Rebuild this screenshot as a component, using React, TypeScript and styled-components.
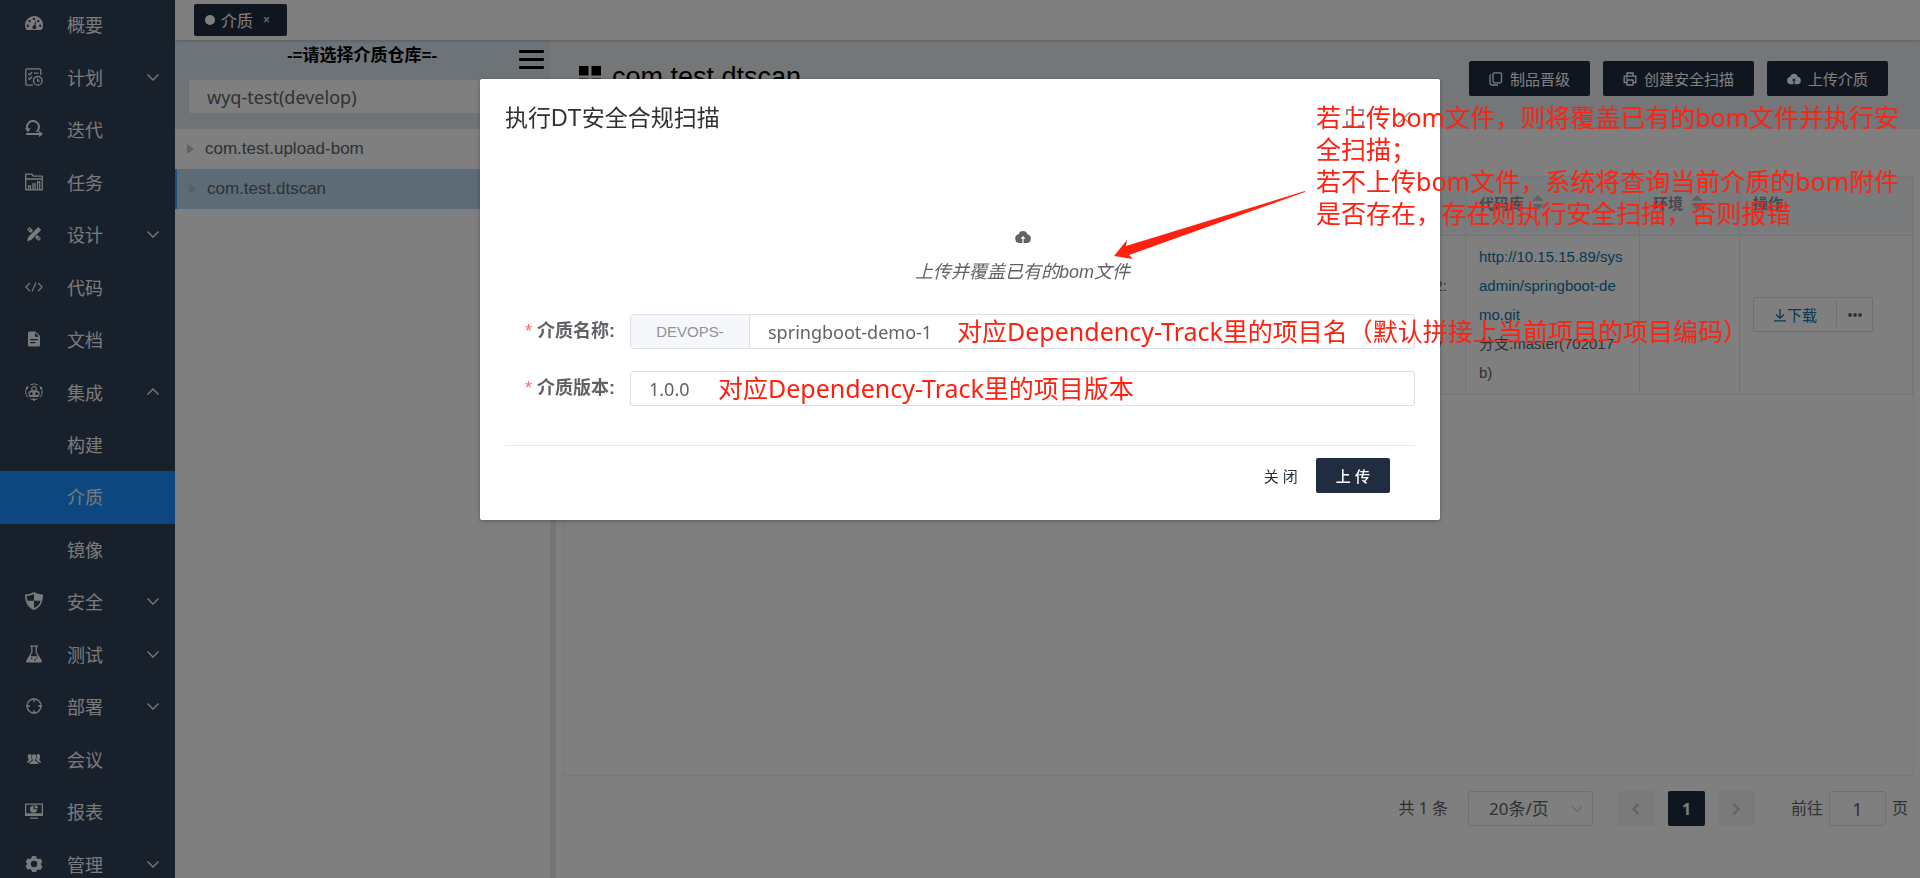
import React from "react";
import styled, { createGlobalStyle, css } from "styled-components";

const ui = `"Liberation Sans", "Noto Sans CJK SC", sans-serif`;
const humanist = `"Noto Sans", "Noto Sans CJK SC", sans-serif`;

const GlobalStyle = createGlobalStyle`
  *, *::before, *::after { box-sizing: border-box; }
  body { margin: 0; background: #fff; font-family: ${ui}; color: #606266; }
  button, input, select { font-family: inherit; margin: 0; }
  svg { display: block; flex: none; }
`;

/* ---------- icons ---------- */

type IconProps = { size?: number; children: React.ReactNode; line?: boolean; box?: number };
const Icon = ({ size = 18, box = 18, line, children }: IconProps) => (
  <svg
    width={size}
    height={size}
    viewBox={`0 0 ${box} ${box}`}
    fill={line ? "none" : "currentColor"}
    stroke={line ? "currentColor" : "none"}
    strokeWidth={1.3}
    fillRule="evenodd"
    aria-hidden="true"
  >
    {children}
  </svg>
);

const GaugeIcon = () => (
  <Icon>
    <path d="M9 1a9 9 0 0 0-9 9c0 1.700.4 3.200 1.200 4.600.2.300.5.400.8.400h14c.3 0 .6-.1.800-.4A9 9 0 0 0 9 1zM2.800 9.500a1.200 1.200 0 1 1 0 2.400 1.200 1.200 0 0 1 0-2.400zM4.600 4.900a1.200 1.200 0 1 1 0 2.400 1.200 1.200 0 0 1 0-2.400zM9 2.700a1.200 1.200 0 1 1 0 2.400 1.200 1.200 0 0 1 0-2.400zM13.400 4.900a1.200 1.200 0 1 1 0 2.400 1.200 1.200 0 0 1 0-2.400zM15.200 9.500a1.200 1.200 0 1 1 0 2.400 1.200 1.200 0 0 1 0-2.400zM10.500 6l.8.200-1 4.200a2 2 0 1 1-1.100-.2z" />
  </Icon>
);
const PlanIcon = () => (
  <Icon line>
    <path d="M8 17.200H2.200a1.400 1.400 0 0 1-1.400-1.400V2.200A1.400 1.400 0 0 1 2.200.8h12.200a1.400 1.400 0 0 1 1.400 1.400V7M3.300 5.500l1.400 1.300L7.200 4M9 5.200h4.500M3.300 10l1.400 1.300 2.500-2.800" />
    <circle cx="12.800" cy="12.800" r="4.300" />
    <path d="M12.700 10.600v2.500h2" />
  </Icon>
);
const SprintIcon = () => (
  <Icon line>
    <path strokeWidth="2" d="M3.500 11A6 6 0 1 1 11.500 11.800M1 14h15" />
    <path fill="currentColor" stroke="none" d="M0 8.300h5.500l-2.500 4zM14 10.800l4 3.200-4 3z" />
  </Icon>
);
const TaskIcon = () => (
  <Icon line>
    <path d="M.7 16.800V1.200h6.200l1.200 2h9.200v13.600zM.7 6h16.600M3.500 16.500v-3.700h2v3.700M8 16.500v-5.700h2v5.700M12.500 16.500V9h2.200v7.500" />
  </Icon>
);
const DesignIcon = () => (
  <Icon>
    <path d="M13.200 1.900 16.200 4.900 6.200 15l-4.200 1.300 1.200-4.300z" />
    <path d="M4.500 2 2 4.500l3.600 3.600 2.500-2.500zm0 1.600.8.800-.8.800-.9-.8zM12.400 9.900l-2.500 2.500 3.600 3.600 2.500-2.500zm1.200 2.700.9.800-1 .9-.8-.8z" />
  </Icon>
);
const CodeIcon = () => (
  <Icon line>
    <path strokeWidth="1.100" d="M4.800 5 .9 9l3.900 4M13.200 5l3.900 4-3.900 4M11 4.500l-4 9" />
  </Icon>
);
const DocIcon = () => (
  <Icon>
    <path d="M4.500 1.500h6l4.500 4.500v9a1.500 1.500 0 0 1-1.500 1.500h-9A1.500 1.500 0 0 1 3 15V3a1.500 1.500 0 0 1 1.500-1.500zM10 2.700v4h4zM5.200 9v1.300h7.600V9zm0 3v1.300h5.300V12z" />
  </Icon>
);
const IntegrateIcon = () => (
  <Icon line>
    <path strokeWidth="1" d="M3 14.500A7.700 7.700 0 0 1 3.400 3M5.500 1.800a7.700 7.700 0 0 1 7.500.2M14.800 3.400a7.700 7.700 0 0 1 .2 11M12.500 15.800a7 7 0 0 1-7 0" />
    <circle strokeWidth="1.200" cx="9" cy="5.800" r="2.300" />
    <circle strokeWidth="1.200" cx="6.200" cy="10.600" r="2.300" />
    <circle strokeWidth="1.200" cx="11.800" cy="10.600" r="2.300" />
    <path strokeWidth="1.200" d="M9 8v5M4.500 13.300h9M6.500 8 5 9.500M11.500 8 13 9.500" />
    <circle fill="currentColor" stroke="none" cx="9" cy="16.500" r="1.300" />
    <circle fill="currentColor" stroke="none" cx="2" cy="5" r="1.200" />
    <circle fill="currentColor" stroke="none" cx="16" cy="5" r="1.200" />
  </Icon>
);
const ShieldIcon = () => (
  <Icon>
    <path d="M9 0c2.500 1.600 5.500 2.400 9 2.500 0 7.500-2.500 13-9 15.500C2.500 15.500 0 10 0 2.500 3.500 2.400 6.500 1.600 9 0zm0 2C7 3 4.500 3.700 1.700 3.900c.1 1.700.4 3.400.8 4.800H9zm0 6.700v7.400c3.600-1.500 5.700-4 6.600-7.400z" />
  </Icon>
);
const FlaskIcon = () => (
  <Icon>
    <path d="M5 .5h8v1.300h-1.200v5.400l5 8.600c.5.900 0 1.700-1 1.700H2.200c-1 0-1.500-.8-1-1.700l5-8.600V1.800H5zm2.500 1.300v5.800L5.300 11.300h7.400l-2.200-3.700V1.800zM6 12.800v1.400h1.400v-1.400zm3.400 1.200v1.500h1.500V14zm2.100-1.700v1.100h1.200v-1.100z" />
  </Icon>
);
const TargetIcon = () => (
  <Icon line>
    <circle cx="9" cy="9" r="7" />
    <path d="M9 1v4M9 13v4M1 9h4M13 9h4" />
  </Icon>
);
const PeopleIcon = () => (
  <Icon>
    <path d="M4.700 4a2.200 2.400 0 0 1 1.900 1.200C6 6.500 6.300 8.500 7 9.600c-.2 1.300-2 1.700-2.600 2.900H1.800c0-2 2-1.700 2-2.800C2.300 8 2.300 4 4.700 4zM13.300 4a2.200 2.400 0 0 0-1.900 1.200c.6 1.300.3 3.300-.4 4.400.2 1.300 2 1.700 2.600 2.900h2.600c0-2-2-1.700-2-2.800C15.700 8 15.700 4 13.300 4z" />
    <path d="M9 4.300c2.900 0 2.600 4 1.100 5.700 0 1.700 3.300 1.500 3.300 4H4.600c0-2.500 3.300-2.300 3.300-4C6.400 8.300 6.100 4.300 9 4.300z" />
  </Icon>
);
const ReportIcon = () => (
  <Icon>
    <path d="M0 1.500h18V14H0zm1.300 1.300v8.400h15.400V2.800zM5 15.500h8v1.300H5z" />
    <path d="M8.600 3.600v3.600h3.600a3.600 3.600 0 1 1-3.600-3.600zM9.800 3a3.500 3.500 0 0 1 3.200 3.200H9.800z" />
  </Icon>
);
const GearIcon = () => (
  <Icon>
    <path d="M7 1h4l.7 2.300 1.500.8 2.300-.5 2 3.400-1.600 1.800v.9l1.600 1.800-2 3.400-2.300-.5-1.500.9L11 17H7l-.7-2.200-1.500-.9-2.300.5-2-3.400 1.600-1.800v-.9L.5 7l2-3.400 2.300.5 1.500-.8zm2 4.800a3.200 3.200 0 1 0 0 6.400 3.200 3.200 0 0 0 0-6.400z" />
  </Icon>
);
const Chevron = ({ up, size = 14 }: { up?: boolean; size?: number }) => (
  <Icon line size={size} box={14}>
    <path d={up ? "M1.500 9.500 7 4l5.500 5.500" : "M1.500 4.500 7 10l5.500-5.500"} />
  </Icon>
);
const CloudIcon = ({ size = 16 }: { size?: number }) => (
  <Icon size={size} box={16}>
    <path d="M8 2a4.500 4.500 0 0 1 4.300 3.300A4.400 4.400 0 0 1 11.700 14H8.600V9.800h1.900L8 7 5.500 9.800h1.900V14H4.300a4.400 4.400 0 0 1-.6-8.700A4.500 4.500 0 0 1 8 2z" />
  </Icon>
);
const CopyIcon = () => (
  <Icon line size={14} box={14}>
    <path d="M5.500.8h5.500a1.500 1.500 0 0 1 1.500 1.500v7a1.500 1.500 0 0 1-1.500 1.500H5.500A1.500 1.500 0 0 1 4 9.300v-7A1.500 1.500 0 0 1 5.500.8zM2 2.500A1.500 1.500 0 0 0 1 4v7.300A1.800 1.800 0 0 0 2.800 13h6" />
  </Icon>
);
const PrinterIcon = () => (
  <Icon line size={14} box={14}>
    <path d="M4 4V1h6v3M4 10.500H1.200V4.200h11.600v6.300H10M4 8h6v5H4zM3 6h1.500" />
  </Icon>
);
const DownloadIcon = () => (
  <Icon line size={14} box={14}>
    <path d="M7 1v9M3 6.500 7 10.300l4-3.800M1 12.800h12" />
  </Icon>
);
const GridIcon = () => (
  <Icon size={22} box={22}>
    <path d="M0 0h9.500v9.500H0zM12.500 0H22v9.500h-9.500zM0 12.500h9.500V22H0zM12.500 12.500H22V22h-9.500z" />
  </Icon>
);

/* ---------- sidebar ---------- */

const Shell = styled.div`
  display: flex;
  height: 100vh;
  overflow: hidden;
`;
const Sidebar = styled.nav`
  flex: 0 0 175px;
  display: flex;
  flex-direction: column;
  height: calc(100% + 14px);
  margin-top: -1px;
  background: #304156;
`;
const MenuLink = styled.a<{ $active?: boolean }>`
  flex: 1 0 0;
  min-height: 48px;
  display: grid;
  grid-template-columns: 18px 1fr 14px;
  column-gap: 24px;
  align-items: center;
  padding: 0 15px 2px 25px;
  font-size: 18px;
  color: #f4f4f5;
  text-decoration: none;
  background: ${(p) => (p.$active ? "#1890ff" : "transparent")};
`;

type MenuEntry = { label: string; icon?: React.ReactNode; fold?: "down" | "up"; active?: boolean };
const menu: MenuEntry[] = [
  { label: "概要", icon: <GaugeIcon /> },
  { label: "计划", icon: <PlanIcon />, fold: "down" },
  { label: "迭代", icon: <SprintIcon /> },
  { label: "任务", icon: <TaskIcon /> },
  { label: "设计", icon: <DesignIcon />, fold: "down" },
  { label: "代码", icon: <CodeIcon /> },
  { label: "文档", icon: <DocIcon /> },
  { label: "集成", icon: <IntegrateIcon />, fold: "up" },
  { label: "构建" },
  { label: "介质", active: true },
  { label: "镜像" },
  { label: "安全", icon: <ShieldIcon />, fold: "down" },
  { label: "测试", icon: <FlaskIcon />, fold: "down" },
  { label: "部署", icon: <TargetIcon />, fold: "down" },
  { label: "会议", icon: <PeopleIcon /> },
  { label: "报表", icon: <ReportIcon /> },
  { label: "管理", icon: <GearIcon />, fold: "down" },
];

/* ---------- workspace ---------- */

const Workspace = styled.div`
  flex: 1;
  min-width: 0;
  display: flex;
  flex-direction: column;
`;
const TabBar = styled.header`
  flex: 0 0 40px;
  display: flex;
  align-items: center;
  padding-left: 19px;
  position: relative;
  background: #fff;
  box-shadow: 0 1px 3px rgba(0, 0, 0, 0.2);
`;
const PageTab = styled.button`
  display: flex;
  align-items: center;
  height: 32px;
  padding: 0 17px 0 11px;
  gap: 6px;
  border: 0;
  border-radius: 2px;
  background: #202d40;
  color: #fff;
  font-size: 16px;
`;
const TabDot = styled.span`
  width: 10px;
  height: 10px;
  border-radius: 50%;
  background: #fff;
`;
const TabClose = styled.span`
  margin-left: 4px;
  font-size: 12px;
`;
const Columns = styled.div`
  flex: 1;
  min-height: 0;
  display: flex;
`;
const TreePanel = styled.aside`
  flex: 0 0 375px;
`;
const TreeHeader = styled.div`
  height: 89px;
  padding: 0 14px;
  background: #dce7ee;
`;
const TreeTitleRow = styled.div`
  display: grid;
  grid-template-columns: 1fr 25px;
  align-items: center;
  height: 40px;
  padding-bottom: 8px;
  margin-right: -8px;
`;
const TreeTitle = styled.h2`
  margin: 0;
  padding-left: 16px;
  text-align: center;
  font-size: 17px;
  line-height: 32px;
  font-weight: 700;
  color: #000;
`;
const MenuToggle = styled.button`
  display: flex;
  flex-direction: column;
  gap: 5px;
  width: 25px;
  margin-top: 6px;
  padding: 0;
  border: 0;
  background: none;
`;
const Bar = styled.span`
  height: 3px;
  border-radius: 1px;
  background: #000;
`;
const RepoSelect = styled.select`
  display: block;
  width: 100%;
  height: 33px;
  padding: 0 18px;
  border: 0;
  border-radius: 2px;
  appearance: none;
  background: #fff;
  color: #606266;
  font-family: ${humanist};
  font-size: 18px;
`;
const TreeList = styled.ul`
  margin: 0;
  padding: 0;
  list-style: none;
`;
const TreeNode = styled.li<{ $active?: boolean }>`
  display: flex;
  align-items: center;
  gap: 10px;
  height: 40px;
  padding-left: 12px;
  font-size: 17px;
  ${(p) =>
    p.$active &&
    css`
      border-left: 2px solid #409eff;
      background: #bbd6ee;
    `}
`;
const Caret = styled.span<{ $faint?: boolean }>`
  border: 5px solid transparent;
  border-left: 7px solid ${(p) => (p.$faint ? "#aebfd0" : "#c0c4cc")};
  border-right: 0;
  margin-right: 1px;
`;
const Splitter = styled.div`
  flex: 0 0 6px;
  margin-top: 88px;
  background: #e6ebf1;
`;
const Main = styled.main`
  flex: 1;
  min-width: 0;
  display: flex;
  flex-direction: column;
  margin-left: -6px;
`;
const TitleBar = styled.div`
  flex: 0 0 89px;
  display: flex;
  align-items: flex-start;
  padding: 21px 32px 0 29px;
  background: #e8ecf0;
`;
const PageTitle = styled.h1`
  flex: 1;
  display: flex;
  align-items: center;
  gap: 11px;
  margin: 0;
  font-size: 27px;
  line-height: 32px;
  font-weight: 400;
  color: #000;
`;
const Actions = styled.div`
  display: flex;
  gap: 13px;
`;
const DarkButton = styled.button<{ $bold?: boolean }>`
  display: flex;
  align-items: center;
  justify-content: center;
  gap: 7px;
  height: 35px;
  padding: 0 20px;
  border: 0;
  border-radius: 2px;
  background: #202d40;
  color: #fff;
  font-size: 15px;
  font-weight: ${(p) => (p.$bold ? 500 : 400)};
`;
const Card = styled.section`
  flex: 1;
  min-height: 0;
  margin: 47px 6px 0 13px;
  border: 1px solid #ebeef5;
`;
const Table = styled.table`
  width: 100%;
  table-layout: fixed;
  border-collapse: collapse;
  font-size: 15px;
`;
const Th = styled.th<{ $w?: number }>`
  width: ${(p) => (p.$w ? `${p.$w}px` : "auto")};
  height: 58px;
  padding: 0 13px 6px;
  border-right: 1px solid #e4e8f0;
  border-bottom: 1px solid #e4e8f0;
  background: #f5f7fa;
  color: #909399;
  text-align: left;
`;
const HeadLabel = styled.span`
  display: flex;
  align-items: center;
  gap: 8px;
`;
const Sorter = styled.span`
  display: grid;
  gap: 3px;
  &::before,
  &::after {
    content: "";
    border: 6px solid transparent;
  }
  &::before {
    border-top: 0;
    border-bottom-color: #c0c4cc;
  }
  &::after {
    border-bottom: 0;
    border-top-color: #c0c4cc;
  }
`;
const Td = styled.td`
  height: 159px;
  padding: 6px 13px;
  border-right: 1px solid #e4e8f0;
  border-bottom: 1px solid #e4e8f0;
  line-height: 29px;
  word-break: break-all;
`;
const EdgeText = styled.div`
  display: grid;
  justify-content: end;
  row-gap: 29px;
  padding-right: 5px;
`;
const RepoLink = styled.a`
  display: block;
  color: #0e73a6;
  text-decoration: none;
`;
const SplitButton = styled.div`
  display: flex;
  align-items: center;
  width: 120px;
  height: 35px;
  border: 1px solid #dcdfe6;
  border-radius: 2px;
`;
const SplitPart = styled.button<{ $main?: boolean }>`
  flex: ${(p) => (p.$main ? "1" : "0 0 35px")};
  display: flex;
  align-items: center;
  justify-content: center;
  height: 25px;
  padding: 0;
  border: 0;
  border-right: ${(p) => (p.$main ? "1px solid #dcdfe6" : "0")};
  background: none;
  color: ${(p) => (p.$main ? "#0e73a6" : "#606266")};
  font-size: 15px;
`;
const Pager = styled.footer`
  flex: 0 0 102px;
  display: flex;
  align-items: flex-start;
  justify-content: flex-end;
  padding: 15px 12px 0 0;
  font-family: ${humanist};
  font-size: 16px;
  line-height: 35px;
`;
const SizeBox = styled.div`
  position: relative;
  margin: 0 25px 0 20px;
`;
const SizeSelect = styled.select`
  width: 125px;
  height: 35px;
  padding: 0 20px;
  border: 1px solid #dcdfe6;
  border-radius: 3px;
  appearance: none;
  background: #fff;
  color: #606266;
  font-size: 17px;
`;
const SelectArrow = styled.span`
  position: absolute;
  right: 10px;
  top: 12px;
  color: #c0c4cc;
`;
const PageButton = styled.button<{ $current?: boolean }>`
  display: grid;
  place-items: center;
  width: 37px;
  height: 35px;
  margin-right: 13px;
  padding: 0;
  border: 0;
  border-radius: 2px;
  font-size: 16px;
  font-weight: 700;
  background: ${(p) => (p.$current ? "#202d40" : "#f4f4f5")};
  color: ${(p) => (p.$current ? "#fff" : "#c0c4cc")};
`;
const Jump = styled.label`
  display: flex;
  gap: 6px;
  margin-left: 23px;
`;
const JumpInput = styled.input`
  width: 57px;
  height: 35px;
  border: 1px solid #dcdfe6;
  border-radius: 3px;
  text-align: center;
  color: #606266;
  font-family: ${humanist};
  font-size: 18px;
`;

/* ---------- dialog ---------- */

const Mask = styled.div`
  position: fixed;
  inset: 0;
  padding-top: 79px;
  background: rgba(0, 0, 0, 0.5);
`;
const Dialog = styled.section`
  position: relative;
  width: 50%;
  margin: 0 auto;
  padding: 25px 25px 27px;
  border-radius: 2px;
  background: #fff;
  box-shadow: 0 1px 4px rgba(0, 0, 0, 0.3);
`;
const DialogHeader = styled.header`
  display: flex;
  justify-content: space-between;
  height: 28px;
`;
const DialogTitle = styled.h2`
  margin: 0;
  font-size: 23px;
  line-height: 28px;
  font-weight: 400;
  color: #303133;
`;
const WindowControls = styled.div`
  display: flex;
  align-items: center;
  gap: 31px;
  padding-right: 2px;
  color: #909399;
`;
const IconButton = styled.button`
  padding: 0;
  border: 0;
  background: none;
  color: inherit;
`;
const UploadArea = styled.div`
  display: flex;
  flex-direction: column;
  align-items: center;
  gap: 15px;
  margin: 97px 0 30px 125px;
`;
const UploadHint = styled.em`
  font-size: 18px;
  line-height: 24px;
`;
const Field = styled.div`
  display: flex;
  margin-bottom: 22px;
`;
const FieldLabel = styled.label`
  flex: 0 0 125px;
  padding-right: 15px;
  text-align: right;
  font-size: 18px;
  line-height: 35px;
  font-weight: 700;
`;
const Required = styled.span`
  margin-right: 5px;
  font-weight: 400;
  color: #f56c6c;
`;
const FieldBox = styled.div`
  position: relative;
  flex: 1;
  display: flex;
  height: 35px;
  border: 1px solid #dcdfe6;
  border-radius: 3px;
`;
const Prepend = styled.span`
  flex: 0 0 119px;
  border-right: 1px solid #dcdfe6;
  background: #f5f7fa;
  color: #909399;
  font-size: 15px;
  line-height: 33px;
  text-align: center;
`;
const TextInput = styled.input`
  flex: 1;
  min-width: 0;
  padding: 0 18px;
  border: 0;
  background: none;
  color: #606266;
  font-family: ${humanist};
  font-size: 18px;
`;
const DialogFooter = styled.footer`
  display: flex;
  justify-content: flex-end;
  gap: 18px;
  margin-top: 39px;
  padding: 12px 25px 0 0;
  border-top: 1px solid #e9eaec;
`;
const TextButton = styled.button`
  padding: 0;
  border: 0;
  background: none;
  color: #1f2d3d;
  font-size: 15px;
`;

const Note = styled.p<{ $left: number; $top: number; $wide?: boolean }>`
  position: absolute;
  left: ${(p) => p.$left}px;
  top: ${(p) => p.$top}px;
  width: ${(p) => (p.$wide ? "600px" : "max-content")};
  margin: 0;
  font-family: ${humanist};
  font-size: 25px;
  line-height: 32px;
  color: #ff2010;
  pointer-events: none;
`;
const ArrowMark = styled.svg`
  position: absolute;
  left: 634px;
  top: 112px;
`;

export default function App() {
  return (
    <>
      <GlobalStyle />
      <Shell>
        <Sidebar>
          {menu.map((m) => (
            <MenuLink key={m.label} href="#" $active={m.active}>
              <span>{m.icon}</span>
              <span>{m.label}</span>
              {m.fold && <Chevron up={m.fold === "up"} />}
            </MenuLink>
          ))}
        </Sidebar>
        <Workspace>
          <TabBar>
            <PageTab>
              <TabDot />
              介质
              <TabClose>×</TabClose>
            </PageTab>
          </TabBar>
          <Columns>
            <TreePanel>
              <TreeHeader>
                <TreeTitleRow>
                  <TreeTitle>-=请选择介质仓库=-</TreeTitle>
                  <MenuToggle aria-label="菜单">
                    <Bar />
                    <Bar />
                    <Bar />
                  </MenuToggle>
                </TreeTitleRow>
                <RepoSelect aria-label="介质仓库">
                  <option>wyq-test(develop)</option>
                </RepoSelect>
              </TreeHeader>
              <TreeList>
                <TreeNode>
                  <Caret />
                  com.test.upload-bom
                </TreeNode>
                <TreeNode $active>
                  <Caret $faint />
                  com.test.dtscan
                </TreeNode>
              </TreeList>
            </TreePanel>
            <Splitter />
            <Main>
              <TitleBar>
                <PageTitle>
                  <GridIcon />
                  com.test.dtscan
                </PageTitle>
                <Actions>
                  <DarkButton>
                    <CopyIcon />
                    制品晋级
                  </DarkButton>
                  <DarkButton>
                    <PrinterIcon />
                    创建安全扫描
                  </DarkButton>
                  <DarkButton>
                    <CloudIcon size={14} />
                    上传介质
                  </DarkButton>
                </Actions>
              </TitleBar>
              <Card>
                <Table>
                  <thead>
                    <tr>
                      <Th />
                      <Th $w={174}>
                        <HeadLabel>
                          代码库
                          <Sorter />
                        </HeadLabel>
                      </Th>
                      <Th $w={100}>
                        <HeadLabel>
                          环境
                          <Sorter />
                        </HeadLabel>
                      </Th>
                      <Th $w={173}>操作</Th>
                    </tr>
                  </thead>
                  <tbody>
                    <tr>
                      <Td>
                        <EdgeText>
                          <span>2:</span>
                          <span>y</span>
                        </EdgeText>
                      </Td>
                      <Td>
                        <RepoLink href="#">http://10.15.15.89/sysadmin/springboot-demo.git</RepoLink>
                        分支:master(702017b)
                      </Td>
                      <Td />
                      <Td>
                        <SplitButton>
                          <SplitPart $main>
                            <DownloadIcon />
                            下载
                          </SplitPart>
                          <SplitPart aria-label="更多">
                            <Icon size={14} box={14}>
                              <circle cx="2" cy="7" r="1.900" />
                              <circle cx="7" cy="7" r="1.900" />
                              <circle cx="12" cy="7" r="1.900" />
                            </Icon>
                          </SplitPart>
                        </SplitButton>
                      </Td>
                    </tr>
                  </tbody>
                </Table>
              </Card>
              <Pager>
                <span>共 1 条</span>
                <SizeBox>
                  <SizeSelect aria-label="每页条数">
                    <option>20条/页</option>
                  </SizeSelect>
                  <SelectArrow>
                    <Chevron size={12} />
                  </SelectArrow>
                </SizeBox>
                <PageButton aria-label="上一页">
                  <Icon line size={14} box={14}>
                    <path strokeWidth="2" d="M9.500 2 4.500 7l5 5" />
                  </Icon>
                </PageButton>
                <PageButton $current>1</PageButton>
                <PageButton aria-label="下一页">
                  <Icon line size={14} box={14}>
                    <path strokeWidth="2" d="m4.500 2 5 5-5 5" />
                  </Icon>
                </PageButton>
                <Jump>
                  前往
                  <JumpInput defaultValue="1" />
                  页
                </Jump>
              </Pager>
            </Main>
          </Columns>
        </Workspace>
      </Shell>

      <Mask>
        <Dialog role="dialog" aria-labelledby="scan-title">
          <DialogHeader>
            <DialogTitle id="scan-title">执行DT安全合规扫描</DialogTitle>
            <WindowControls>
              <IconButton aria-label="全屏">
                <Icon line size={18}>
                  <path strokeWidth="2" d="M1 6V1h5M12 1h5v5M17 12v5h-5M6 17H1v-5" />
                </Icon>
              </IconButton>
              <IconButton aria-label="关闭窗口">
                <Icon line size={18}>
                  <path d="m3 3 12 12M15 3 3 15" />
                </Icon>
              </IconButton>
            </WindowControls>
          </DialogHeader>
          <UploadArea>
            <CloudIcon />
            <UploadHint>上传并覆盖已有的bom文件</UploadHint>
          </UploadArea>
          <Field>
            <FieldLabel htmlFor="media-name">
              <Required>*</Required>介质名称:
            </FieldLabel>
            <FieldBox>
              <Prepend>DEVOPS-</Prepend>
              <TextInput id="media-name" defaultValue="springboot-demo-1" />
              <Note $left={326} $top={0}>
                对应Dependency-Track里的项目名（默认拼接上当前项目的项目编码）
              </Note>
            </FieldBox>
          </Field>
          <Field>
            <FieldLabel htmlFor="media-version">
              <Required>*</Required>介质版本:
            </FieldLabel>
            <FieldBox>
              <TextInput id="media-version" defaultValue="1.0.0" />
              <Note $left={87} $top={0}>
                对应Dependency-Track里的项目版本
              </Note>
            </FieldBox>
          </Field>
          <DialogFooter>
            <TextButton>关 闭</TextButton>
            <DarkButton $bold>上 传</DarkButton>
          </DialogFooter>
          <ArrowMark width="192" height="68" viewBox="0 0 192 68" fill="#ff2010" aria-hidden="true">
            <path d="M0 65 13 49l-1 6L191 0v1L15 64l4 4z" />
          </ArrowMark>
          <Note $left={836} $top={22} $wide>
            若上传bom文件，则将覆盖已有的bom文件并执行安全扫描；
            <br />
            若不上传bom文件，系统将查询当前介质的bom附件是否存在，存在则执行安全扫描，否则报错
          </Note>
        </Dialog>
      </Mask>
    </>
  );
}
